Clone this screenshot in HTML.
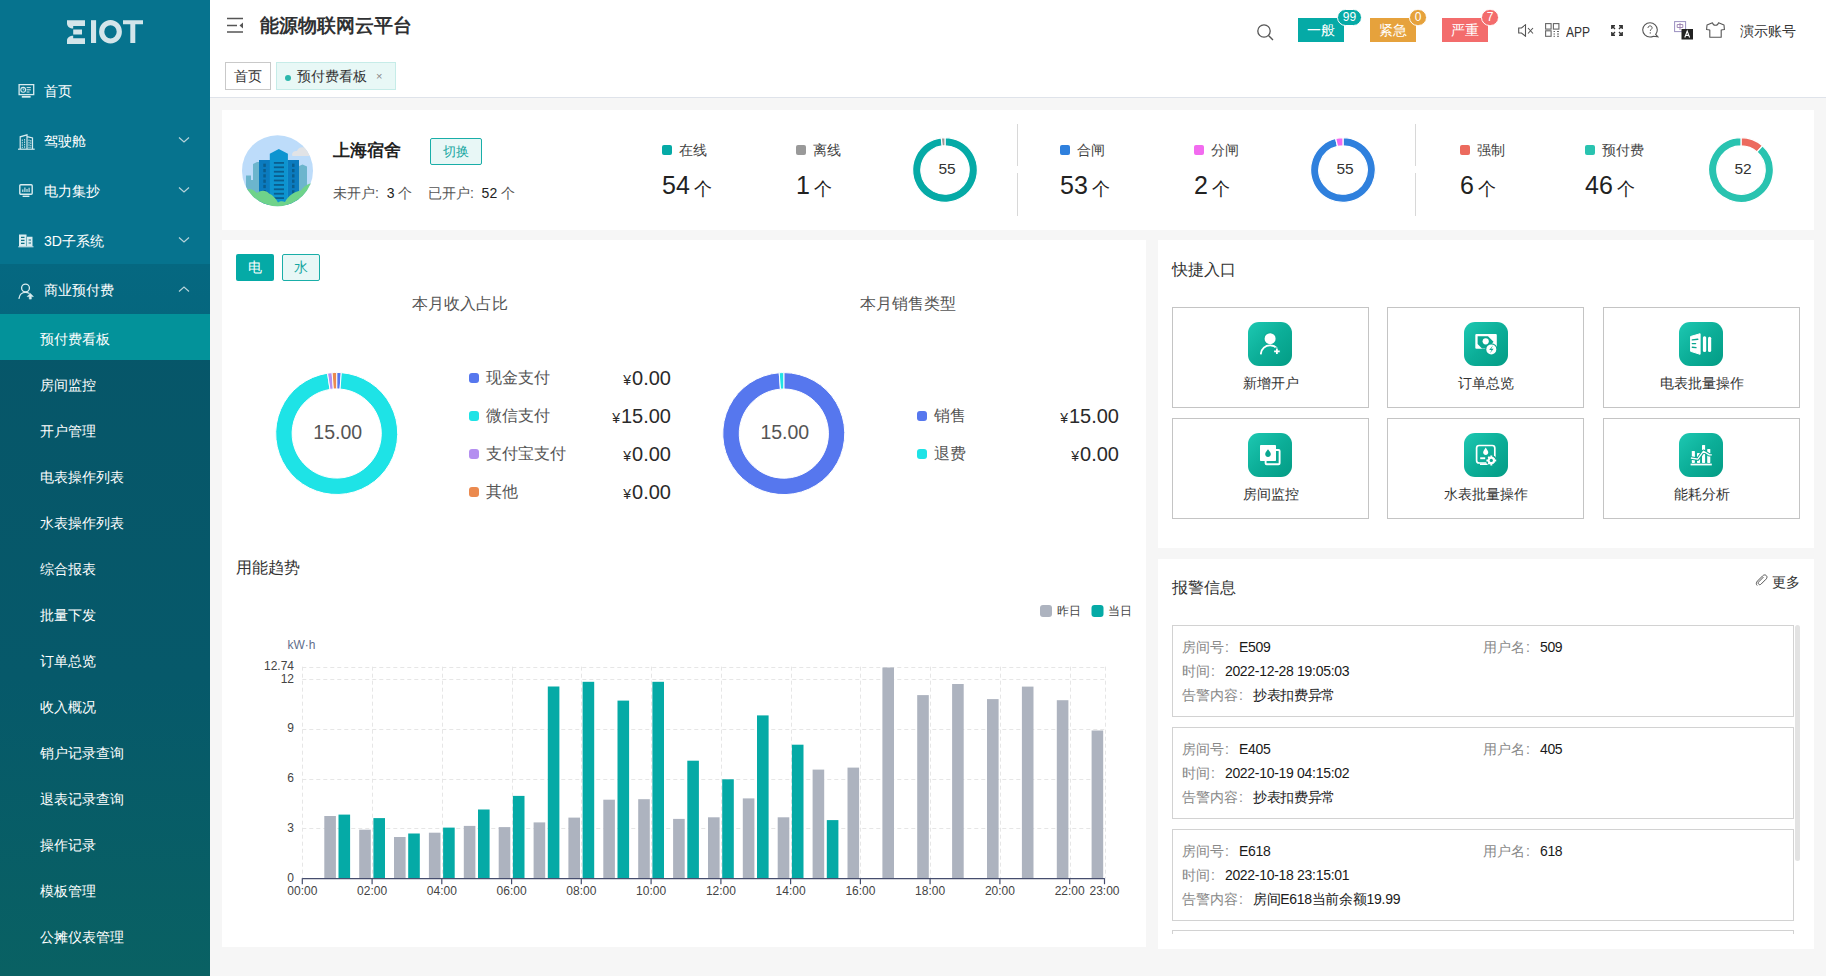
<!DOCTYPE html>
<html><head><meta charset="utf-8">
<style>
*{box-sizing:border-box;margin:0;padding:0}
html,body{width:1826px;height:976px;overflow:hidden}
body{position:relative;background:#f6f6f6;font-family:"Liberation Sans",sans-serif;color:#333}
.a{position:absolute;white-space:nowrap}
#sb{position:absolute;left:0;top:0;width:210px;height:976px;background:linear-gradient(180deg,#06738e 0%,#06738e 27%,#085f63 100%);overflow:hidden}
.mi{position:absolute;left:0;width:210px;height:50px;color:#fff;font-size:14px;line-height:50px}
.mi .t{position:absolute;left:44px;top:1px}
.mi svg.ic{position:absolute;left:18px;top:18px}
.mi .ar{position:absolute;left:178px;top:21px}
.sub{position:absolute;left:0;width:210px;height:46px;color:#fff;font-size:14px;line-height:46px;padding-left:40px;padding-top:2px}
#hd{position:absolute;left:210px;top:0;width:1616px;height:98px;background:#fff;border-bottom:1px solid #dfe3ea}
.card{position:absolute;background:#fff}
</style></head><body>
<div id="sb">
  <svg class="a" style="left:60px;top:14px" width="90" height="36" viewBox="60 14 90 36">
    <path fill="#d3e5ea" d="M67 20.2H85V26H73.2V28.5C70 28.5 67 26.5 67 23.5Z M73.2 29.5H82V34.5H73.2Z M67 43.9V40.5C67 37.5 70 35.8 73.2 35.8V38.2H85V43.9Z"/>
    <rect x="91" y="20.2" width="5.1" height="22.8" fill="#d3e5ea"/>
    <ellipse cx="110.5" cy="31.8" rx="8.8" ry="9.2" fill="none" stroke="#d3e5ea" stroke-width="5.2"/>
    <path fill="#d3e5ea" d="M123 20.2H143V24.2H135.3V43H130.3V24.2H123Z"/>
  </svg>
  <div class="mi" style="top:65px"><svg class="ic" width="17" height="15" viewBox="0 0 17 15" style="left:18px;top:19px"><rect x="1.1" y="0.6" width="14.6" height="10" fill="none" stroke="#d9ecef" stroke-width="1.3"/><circle cx="5.2" cy="5.8" r="2.4" fill="none" stroke="#d9ecef" stroke-width="1.1"/><path d="M5.2 4.3V5.9H6.3" fill="none" stroke="#d9ecef" stroke-width="0.8"/><path d="M8.6 3.6H12.8M8.6 5.8H12.8M8.6 8H11.5" stroke="#d9ecef" stroke-width="1"/><rect x="3.8" y="11.9" width="8.8" height="1.8" fill="#d9ecef"/></svg><span class="t">首页</span></div>
  <div class="mi" style="top:115px"><svg class="ic" width="17" height="16" viewBox="0 0 17 16" style="left:18px;top:19px"><path d="M0 15.2H16.7" stroke="#d9ecef" stroke-width="1.2"/><path d="M2.2 15V2.8L9 0.8V15M9 2.6L14.5 4V15" fill="none" stroke="#d9ecef" stroke-width="1.2"/><path d="M4.3 5.5v8.5M6.6 5v9M11 5.5v8.5M12.8 6v8" stroke="#d9ecef" stroke-width="0.9" stroke-dasharray="1.6 0.8"/></svg><span class="t">驾驶舱</span><svg class="ar" width="12" height="8" viewBox="0 0 12 8"><path d="M1 1.5L6 6L11 1.5" fill="none" stroke="#b7d3da" stroke-width="1.2"/></svg></div>
  <div class="mi" style="top:165px"><svg class="ic" width="16" height="15" viewBox="0 0 16 15" style="left:18px;top:19px"><rect x="1.8" y="0.8" width="12.4" height="9.4" rx="1" fill="none" stroke="#d9ecef" stroke-width="1.4"/><path d="M4.8 8V5.5M6.9 8V3.5M9 8V5M11.1 8V3.8" stroke="#d9ecef" stroke-width="1.1"/><rect x="4.6" y="11.6" width="6.8" height="1.4" fill="#d9ecef"/></svg><span class="t">电力集抄</span><svg class="ar" width="12" height="8" viewBox="0 0 12 8"><path d="M1 1.5L6 6L11 1.5" fill="none" stroke="#b7d3da" stroke-width="1.2"/></svg></div>
  <div class="mi" style="top:215px"><svg class="ic" width="17" height="14" viewBox="0 0 17 14" style="left:18px;top:19px"><path d="M1 12.6V0.4H8.5V12.6ZM9 12.6V2.8H14.5V12.6Z" fill="#d9ecef"/><path d="M3 3.4h3.5M3 6.4h3.5M3 9.4h3.5M10.6 6h2.4M10.6 9h2.4" stroke="#0b6f86" stroke-width="1.2"/><path d="M0.3 12.8H15.5" stroke="#d9ecef" stroke-width="1"/></svg><span class="t">3D子系统</span><svg class="ar" width="12" height="8" viewBox="0 0 12 8"><path d="M1 1.5L6 6L11 1.5" fill="none" stroke="#b7d3da" stroke-width="1.2"/></svg></div>
  <div class="mi" style="top:264px;background:rgba(0,0,0,0.09)"><svg class="ic" width="17" height="17" viewBox="0 0 17 17" style="left:18px;top:19px"><circle cx="7.5" cy="5" r="3.9" fill="none" stroke="#d9ecef" stroke-width="1.3"/><path d="M1 15.3C1.6 11.3 4.2 9.3 7.5 9.3C8.8 9.3 10 9.6 11 10.3" fill="none" stroke="#d9ecef" stroke-width="1.3" stroke-linecap="round"/><path d="M11.3 16.1V13.6H9.2L12.3 10.4L15.4 13.6H13.3V16.1Z" fill="#d9ecef" stroke="#d9ecef" stroke-width="0.6" stroke-linejoin="round"/></svg><span class="t">商业预付费</span><svg class="ar" width="12" height="8" viewBox="0 0 12 8"><path d="M1 6.5L6 2L11 6.5" fill="none" stroke="#b7d3da" stroke-width="1.2"/></svg></div>
  <div style="position:absolute;left:0;top:314px;width:210px;height:662px;background:linear-gradient(180deg,#065669 0%,#06596a 55%,#096163 100%)"></div>
  <div class="sub" style="top:314px;background:#03929a">预付费看板</div>
  <div class="sub" style="top:360px">房间监控</div>
  <div class="sub" style="top:406px">开户管理</div>
  <div class="sub" style="top:452px">电表操作列表</div>
  <div class="sub" style="top:498px">水表操作列表</div>
  <div class="sub" style="top:544px">综合报表</div>
  <div class="sub" style="top:590px">批量下发</div>
  <div class="sub" style="top:636px">订单总览</div>
  <div class="sub" style="top:682px">收入概况</div>
  <div class="sub" style="top:728px">销户记录查询</div>
  <div class="sub" style="top:774px">退表记录查询</div>
  <div class="sub" style="top:820px">操作记录</div>
  <div class="sub" style="top:866px">模板管理</div>
  <div class="sub" style="top:912px">公摊仪表管理</div>
</div>

<div id="hd">
  <svg class="a" style="left:17px;top:17px" width="17" height="16" viewBox="0 0 17 16"><path d="M0 1.5H16M0 8.5H10M0 15H16" stroke="#555" stroke-width="1.6"/><path d="M16 5.5L12.5 8.5L16 11.5Z" fill="#555"/></svg>
  <div class="a" style="left:50px;top:12px;font-size:19px;line-height:28px;font-weight:bold;color:#303133">能源物联网云平台</div>
  <div class="a" style="left:15px;top:62px;width:46px;height:28px;border:1px solid #c9c9c9;font-size:14px;line-height:26px;text-align:center;color:#333">首页</div>
  <div class="a" style="left:66px;top:62px;width:120px;height:28px;border:1px solid #c6ece8;background:#e8f8f6;font-size:14px;line-height:26px;color:#333">
    <span class="a" style="left:8px;top:12px;width:6px;height:6px;border-radius:50%;background:#2bb7ac"></span>
    <span class="a" style="left:20px;top:0">预付费看板</span>
    <span class="a" style="left:99px;top:0;font-size:11px;color:#888">×</span>
  </div>
  <svg class="a" style="left:1047px;top:24px" width="17" height="17" viewBox="0 0 17 17"><circle cx="7" cy="7" r="6.2" fill="none" stroke="#555" stroke-width="1.3"/><path d="M11.5 11.5L16 16" stroke="#555" stroke-width="1.3"/></svg>
  <div class="a" style="left:1088px;top:18px;width:46px;height:24px;background:#05aaa6;color:#fff;font-size:14px;line-height:24px;text-align:center">一般</div>
  <div class="a" style="left:1127px;top:9px;width:25px;height:17px;border-radius:9px;background:#05aaa6;border:1px solid #fff;color:#fff;font-size:12px;line-height:15px;text-align:center">99</div>
  <div class="a" style="left:1160px;top:18px;width:46px;height:24px;background:#e6a23c;color:#fff;font-size:14px;line-height:24px;text-align:center">紧急</div>
  <div class="a" style="left:1199px;top:9px;width:18px;height:17px;border-radius:9px;background:#e6a23c;border:1px solid #fff;color:#fff;font-size:12px;line-height:15px;text-align:center">0</div>
  <div class="a" style="left:1232px;top:18px;width:46px;height:24px;background:#f36c6c;color:#fff;font-size:14px;line-height:24px;text-align:center">严重</div>
  <div class="a" style="left:1271px;top:9px;width:18px;height:17px;border-radius:9px;background:#f36c6c;border:1px solid #fff;color:#fff;font-size:12px;line-height:15px;text-align:center">7</div>
  <svg class="a" style="left:1308px;top:24px" width="17" height="13" viewBox="0 0 17 13"><path d="M0.7 4H3.5L7.5 0.8V12.2L3.5 9H0.7Z" fill="none" stroke="#555" stroke-width="1.1"/><path d="M10 4L15 9.5M15 4L10 9.5" stroke="#555" stroke-width="1.1"/></svg>
  <svg class="a" style="left:1335px;top:23px" width="15" height="14" viewBox="0 0 15 14"><rect x="0.6" y="0.6" width="5.5" height="5.5" fill="none" stroke="#666" stroke-width="1.1"/><rect x="8.4" y="0.6" width="5.5" height="5.5" fill="none" stroke="#666" stroke-width="1.1"/><rect x="0.6" y="7.8" width="5.5" height="5.5" fill="none" stroke="#666" stroke-width="1.1"/><path d="M8.5 8.5h1.5M12 8.5h2M8.5 11h1.5M12 11h2M8.5 13.3h1.5M12 13.3h2" stroke="#666" stroke-width="1"/></svg>
  <div class="a" style="left:1356px;top:22px;font-size:14px;line-height:20px;color:#333;transform:scaleX(0.86);transform-origin:0 0">APP</div>
  <svg class="a" style="left:1401px;top:25px" width="12" height="11" viewBox="0 0 12 11"><path d="M0.8 4V0.8H4M0.8 0.8L4 4M11.2 4V0.8H8M11.2 0.8L8 4M0.8 7V10.2H4M0.8 10.2L4 7M11.2 7V10.2H8M11.2 10.2L8 7" fill="none" stroke="#333" stroke-width="1.4"/></svg>
  <svg class="a" style="left:1432px;top:22px" width="17" height="16" viewBox="0 0 17 16"><path d="M8 0.7C12 0.7 15.3 3.9 15.3 7.8C15.3 9.6 14.7 11.2 13.7 12.4L15.8 14.8L11.5 14.2C10.4 14.7 9.2 15 8 15C4 15 0.7 11.8 0.7 7.8C0.7 3.9 4 0.7 8 0.7Z" fill="none" stroke="#555" stroke-width="1.1"/><path d="M6 6C6 4.6 7 3.9 8.1 3.9C9.2 3.9 10.1 4.6 10.1 5.8C10.1 7.2 8.3 7.4 8.3 8.9" fill="none" stroke="#555" stroke-width="1"/><circle cx="8.3" cy="10.9" r="0.7" fill="#555"/></svg>
  <svg class="a" style="left:1464px;top:21px" width="20" height="19" viewBox="0 0 20 19"><rect x="0.6" y="0.6" width="11" height="10" fill="#fff" stroke="#9a8fc0" stroke-width="1"/><path d="M3.2 3.5h5.6v3H3.2zM6 2v7" fill="none" stroke="#9a7fb0" stroke-width="0.9"/><rect x="7.5" y="8" width="11.5" height="10.5" fill="#222"/><path d="M10.8 16.5L13.2 10L15.6 16.5M11.6 14.4H14.8" fill="none" stroke="#fff" stroke-width="1.1"/></svg>
  <svg class="a" style="left:1496px;top:22px" width="19" height="16" viewBox="0 0 19 16"><path d="M6.5 0.8L1 3L0.6 7.5L3.8 8V15.2H15.2V8L18.4 7.5L18 3L12.5 0.8C12 2.6 11 3.3 9.5 3.3C8 3.3 7 2.6 6.5 0.8Z" fill="none" stroke="#555" stroke-width="1.1" stroke-linejoin="round"/></svg>
  <div class="a" style="left:1530px;top:21px;font-size:14px;line-height:20px;color:#333">演示账号</div>
</div>

<div class="card" style="left:222px;top:110px;width:1592px;height:120px">
  <svg class="a" style="left:13px;top:18px" width="85" height="85" viewBox="0 0 85 85">
    <defs><clipPath id="cc"><circle cx="42.5" cy="42.7" r="35.5"/></clipPath></defs>
    <circle cx="42.5" cy="42.7" r="35.5" fill="#bddcfa"/>
    <g clip-path="url(#cc)">
      <path d="M57 27C57 24 59.5 22.5 62 23C63 20 66 18.5 69 19.5C71 18 75 18.5 76 21L76 28H59C57.5 28 57 27.5 57 27Z" fill="#e1e3e6"/>
      <path d="M11 75V47.5H16V52H18V36L22 34L24 34V75Z" fill="#6cb5cd"/>
      <path d="M63 75V38.5L67.5 36.5L72 38.5V75Z" fill="#6cb5cd"/>
      <rect x="24" y="32" width="11" height="45" fill="#0b7bbf"/>
      <rect x="52.5" y="32" width="11.5" height="45" fill="#0b7bbf"/>
      <path d="M34.8 25.7L43.8 21L52.9 25.7V77H34.8Z" fill="#0d94d0"/>
      <g fill="#0a5e8e"><rect x="38.9" y="34.0" width="10.1" height="1.8"/><rect x="38.9" y="38.4" width="10.1" height="1.8"/><rect x="38.9" y="42.8" width="10.1" height="1.8"/><rect x="38.9" y="47.2" width="10.1" height="1.8"/><rect x="38.9" y="51.6" width="10.1" height="1.8"/><rect x="38.9" y="56.0" width="10.1" height="1.8"/><rect x="38.9" y="60.4" width="10.1" height="1.8"/><rect x="38.9" y="64.8" width="10.1" height="1.8"/><rect x="38.9" y="69.2" width="10.1" height="1.8"/><rect x="28.3" y="35.7" width="2.5" height="3.2"/><rect x="57" y="35.7" width="2.5" height="3.2"/><rect x="28.3" y="41.0" width="2.5" height="3.2"/><rect x="57" y="41.0" width="2.5" height="3.2"/><rect x="28.3" y="46.3" width="2.5" height="3.2"/><rect x="57" y="46.3" width="2.5" height="3.2"/><rect x="28.3" y="51.6" width="2.5" height="3.2"/><rect x="57" y="51.6" width="2.5" height="3.2"/><rect x="28.3" y="56.9" width="2.5" height="3.2"/><rect x="57" y="56.9" width="2.5" height="3.2"/><rect x="28.3" y="62.2" width="2.5" height="3.2"/><rect x="57" y="62.2" width="2.5" height="3.2"/></g>
      <path d="M5 80V66C9 60 17 59 22 65C26 62 31 62 34 65.5C38 67 41 71 43 74.5C45 73 48 73 50 74C53 68 60 63 66 62.5C69 58 74 55 80 55V80Z" fill="#6fd38a"/>
    </g>
  </svg>
  <div class="a" style="left:111px;top:29px;font-size:17px;line-height:24px;font-weight:bold;color:#222">上海宿舍</div>
  <div class="a" style="left:208px;top:28px;width:52px;height:27px;border:1px solid #19aea8;background:#e8f7f6;color:#12a5a0;font-size:13px;line-height:25px;text-align:center;border-radius:2px">切换</div>
  <div class="a" style="left:111px;top:73px;font-size:14px;line-height:20px;color:#555">未开户:&nbsp; <span style="color:#222">3</span> 个 &nbsp; &nbsp;已开户:&nbsp; <span style="color:#222">52</span> 个</div>
<span class="a" style="left:440px;top:35px;width:10px;height:10px;border-radius:2px;background:#05aaa6"></span><div class="a" style="left:457px;top:30px;font-size:14px;line-height:20px;color:#444">在线</div><div class="a" style="left:440px;top:59px;font-size:25px;line-height:32px;color:#222">54<span style="font-size:18px;margin-left:4px;position:relative;top:1px">个</span></div><span class="a" style="left:574px;top:35px;width:10px;height:10px;border-radius:2px;background:#999"></span><div class="a" style="left:591px;top:30px;font-size:14px;line-height:20px;color:#444">离线</div><div class="a" style="left:574px;top:59px;font-size:25px;line-height:32px;color:#222">1<span style="font-size:18px;margin-left:4px;position:relative;top:1px">个</span></div><svg class="a" style="left:689px;top:26px" width="68" height="68" viewBox="689 26 68 68"><path d="M723.00 27.60A32.4 32.4 0 1 1 719.31 27.81L720.24 35.96A24.2 24.2 0 1 0 723.00 35.80Z" fill="#05aaa6" stroke="#fff" stroke-width="1.2"/><path d="M719.31 27.81A32.4 32.4 0 0 1 723.00 27.60L723.00 35.80A24.2 24.2 0 0 0 720.24 35.96Z" fill="#999" stroke="#fff" stroke-width="1.2"/><text x="725" y="64" text-anchor="middle" font-size="15.5" fill="#333" font-family="Liberation Sans">55</text></svg><span class="a" style="left:795px;top:14px;width:1px;height:42px;background:#d8d8d8"></span><span class="a" style="left:795px;top:63px;width:1px;height:43px;background:#d8d8d8"></span>
<span class="a" style="left:838px;top:35px;width:10px;height:10px;border-radius:2px;background:#2f80dd"></span><div class="a" style="left:855px;top:30px;font-size:14px;line-height:20px;color:#444">合闸</div><div class="a" style="left:838px;top:59px;font-size:25px;line-height:32px;color:#222">53<span style="font-size:18px;margin-left:4px;position:relative;top:1px">个</span></div><span class="a" style="left:972px;top:35px;width:10px;height:10px;border-radius:2px;background:#f26bef"></span><div class="a" style="left:989px;top:30px;font-size:14px;line-height:20px;color:#444">分闸</div><div class="a" style="left:972px;top:59px;font-size:25px;line-height:32px;color:#222">2<span style="font-size:18px;margin-left:4px;position:relative;top:1px">个</span></div><svg class="a" style="left:1087px;top:26px" width="68" height="68" viewBox="1087 26 68 68"><path d="M1121.00 27.60A32.4 32.4 0 1 1 1113.66 28.44L1115.52 36.43A24.2 24.2 0 1 0 1121.00 35.80Z" fill="#2f80dd" stroke="#fff" stroke-width="1.2"/><path d="M1113.66 28.44A32.4 32.4 0 0 1 1121.00 27.60L1121.00 35.80A24.2 24.2 0 0 0 1115.52 36.43Z" fill="#f26bef" stroke="#fff" stroke-width="1.2"/><text x="1123" y="64" text-anchor="middle" font-size="15.5" fill="#333" font-family="Liberation Sans">55</text></svg><span class="a" style="left:1193px;top:14px;width:1px;height:42px;background:#d8d8d8"></span><span class="a" style="left:1193px;top:63px;width:1px;height:43px;background:#d8d8d8"></span>
<span class="a" style="left:1238px;top:35px;width:10px;height:10px;border-radius:2px;background:#ec6a5e"></span><div class="a" style="left:1255px;top:30px;font-size:14px;line-height:20px;color:#444">强制</div><div class="a" style="left:1238px;top:59px;font-size:25px;line-height:32px;color:#222">6<span style="font-size:18px;margin-left:4px;position:relative;top:1px">个</span></div><span class="a" style="left:1363px;top:35px;width:10px;height:10px;border-radius:2px;background:#29c3b0"></span><div class="a" style="left:1380px;top:30px;font-size:14px;line-height:20px;color:#444">预付费</div><div class="a" style="left:1363px;top:59px;font-size:25px;line-height:32px;color:#222">46<span style="font-size:18px;margin-left:4px;position:relative;top:1px">个</span></div><svg class="a" style="left:1485px;top:26px" width="68" height="68" viewBox="1485 26 68 68"><path d="M1519.00 27.60A32.4 32.4 0 0 1 1540.49 35.75L1535.05 41.89A24.2 24.2 0 0 0 1519.00 35.80Z" fill="#ec6a5e" stroke="#fff" stroke-width="1.2"/><path d="M1540.49 35.75A32.4 32.4 0 1 1 1519.00 27.60L1519.00 35.80A24.2 24.2 0 1 0 1535.05 41.89Z" fill="#29c3b0" stroke="#fff" stroke-width="1.2"/><text x="1521" y="64" text-anchor="middle" font-size="15.5" fill="#333" font-family="Liberation Sans">52</text></svg>
</div>
<div class="card" style="left:222px;top:240px;width:924px;height:707px">
<div class="a" style="left:14px;top:14px;width:38px;height:27px;background:#05aaa6;border-radius:2px;color:#fff;font-size:14px;line-height:27px;text-align:center">电</div><div class="a" style="left:60px;top:14px;width:38px;height:27px;background:#e8f7f6;border:1px solid #19aea8;border-radius:2px;color:#12a5a0;font-size:14px;line-height:25px;text-align:center">水</div>
<div class="a" style="left:190px;top:53px;font-size:16px;line-height:22px;color:#555">本月收入占比</div><div class="a" style="left:638px;top:53px;font-size:16px;line-height:22px;color:#555">本月销售类型</div>
<svg class="a" style="left:0;top:0" width="924" height="520" viewBox="0 0 924 520"><path d="M114.70 132.50A61 61 0 0 1 119.29 132.67L118.06 149.03A44.6 44.6 0 0 0 114.70 148.90Z" fill="#5677ee" stroke="#fff" stroke-width="1"/><path d="M119.29 132.67A61 61 0 1 1 105.54 133.19L108.00 149.41A44.6 44.6 0 1 0 118.06 149.03Z" fill="#1ee3e6" stroke="#fff" stroke-width="1"/><path d="M105.54 133.19A61 61 0 0 1 110.11 132.67L111.34 149.03A44.6 44.6 0 0 0 108.00 149.41Z" fill="#b48ff0" stroke="#fff" stroke-width="1"/><path d="M110.11 132.67A61 61 0 0 1 114.70 132.50L114.70 148.90A44.6 44.6 0 0 0 111.34 149.03Z" fill="#eb8a4f" stroke="#fff" stroke-width="1"/><path d="M561.80 132.60A61 61 0 1 1 557.21 132.77L558.44 149.13A44.6 44.6 0 1 0 561.80 149.00Z" fill="#5677ee" stroke="#fff" stroke-width="1"/><path d="M557.21 132.77A61 61 0 0 1 561.80 132.60L561.80 149.00A44.6 44.6 0 0 0 558.44 149.13Z" fill="#1ee3e6" stroke="#fff" stroke-width="1"/><text x="115.69999999999999" y="199.0" text-anchor="middle" font-size="19.5" fill="#555" font-family="Liberation Sans">15.00</text><text x="562.8" y="199.10000000000002" text-anchor="middle" font-size="19.5" fill="#555" font-family="Liberation Sans">15.00</text></svg>
<span class="a" style="left:247px;top:132.8px;width:10px;height:10px;border-radius:3px;background:#5677ee"></span><div class="a" style="left:264px;top:126.8px;font-size:16px;line-height:22px;color:#555">现金支付</div><div class="a" style="right:475px;top:125.8px;font-size:20px;line-height:25px;color:#2a2a2a"><span style="font-size:14px;margin-right:1px">¥</span>0.00</div>
<span class="a" style="left:247px;top:170.7px;width:10px;height:10px;border-radius:3px;background:#1ee3e6"></span><div class="a" style="left:264px;top:164.7px;font-size:16px;line-height:22px;color:#555">微信支付</div><div class="a" style="right:475px;top:163.7px;font-size:20px;line-height:25px;color:#2a2a2a"><span style="font-size:14px;margin-right:1px">¥</span>15.00</div>
<span class="a" style="left:247px;top:208.6px;width:10px;height:10px;border-radius:3px;background:#b48ff0"></span><div class="a" style="left:264px;top:202.6px;font-size:16px;line-height:22px;color:#555">支付宝支付</div><div class="a" style="right:475px;top:201.6px;font-size:20px;line-height:25px;color:#2a2a2a"><span style="font-size:14px;margin-right:1px">¥</span>0.00</div>
<span class="a" style="left:247px;top:246.5px;width:10px;height:10px;border-radius:3px;background:#eb8a4f"></span><div class="a" style="left:264px;top:240.5px;font-size:16px;line-height:22px;color:#555">其他</div><div class="a" style="right:475px;top:239.5px;font-size:20px;line-height:25px;color:#2a2a2a"><span style="font-size:14px;margin-right:1px">¥</span>0.00</div>
<span class="a" style="left:695px;top:170.8px;width:10px;height:10px;border-radius:3px;background:#5677ee"></span><div class="a" style="left:712px;top:164.8px;font-size:16px;line-height:22px;color:#555">销售</div><div class="a" style="right:27px;top:163.8px;font-size:20px;line-height:25px;color:#2a2a2a"><span style="font-size:14px;margin-right:1px">¥</span>15.00</div>
<span class="a" style="left:695px;top:208.7px;width:10px;height:10px;border-radius:3px;background:#1ee3e6"></span><div class="a" style="left:712px;top:202.7px;font-size:16px;line-height:22px;color:#555">退费</div><div class="a" style="right:27px;top:201.7px;font-size:20px;line-height:25px;color:#2a2a2a"><span style="font-size:14px;margin-right:1px">¥</span>0.00</div>
<div class="a" style="left:14px;top:317px;font-size:16px;line-height:22px;color:#333">用能趋势</div>
<svg class="a" style="left:0;top:0" width="924" height="707" viewBox="222 240 924 707" font-family="Liberation Sans"><g stroke="#e6e6e6" stroke-width="1" stroke-dasharray="4 3" fill="none"><path d="M302.3 828.5H1104.5"/><path d="M302.3 779.5H1104.5"/><path d="M302.3 729.5H1104.5"/><path d="M302.3 679.5H1104.5"/><path d="M302.3 667.5H1104.5"/><path d="M302.5 666.7V878.2"/><path d="M372.5 666.7V878.2"/><path d="M442.5 666.7V878.2"/><path d="M512.5 666.7V878.2"/><path d="M581.5 666.7V878.2"/><path d="M651.5 666.7V878.2"/><path d="M721.5 666.7V878.2"/><path d="M791.5 666.7V878.2"/><path d="M860.5 666.7V878.2"/><path d="M930.5 666.7V878.2"/><path d="M1000.5 666.7V878.2"/><path d="M1070.5 666.7V878.2"/><path d="M1105.5 666.7V878.2"/></g><rect x="324.3" y="816.0" width="11.6" height="62.3" fill="#adb3bf"/><rect x="359.2" y="829.7" width="11.6" height="48.5" fill="#adb3bf"/><rect x="394.0" y="837.0" width="11.6" height="41.2" fill="#adb3bf"/><rect x="428.9" y="832.7" width="11.6" height="45.5" fill="#adb3bf"/><rect x="463.8" y="825.9" width="11.6" height="52.3" fill="#adb3bf"/><rect x="498.7" y="827.1" width="11.6" height="51.1" fill="#adb3bf"/><rect x="533.6" y="822.4" width="11.6" height="55.8" fill="#adb3bf"/><rect x="568.4" y="817.6" width="11.6" height="60.6" fill="#adb3bf"/><rect x="603.3" y="799.7" width="11.6" height="78.5" fill="#adb3bf"/><rect x="638.2" y="799.2" width="11.6" height="79.0" fill="#adb3bf"/><rect x="673.1" y="818.9" width="11.6" height="59.3" fill="#adb3bf"/><rect x="708.0" y="817.3" width="11.6" height="60.9" fill="#adb3bf"/><rect x="742.8" y="798.4" width="11.6" height="79.8" fill="#adb3bf"/><rect x="777.7" y="817.3" width="11.6" height="60.9" fill="#adb3bf"/><rect x="812.6" y="769.6" width="11.6" height="108.6" fill="#adb3bf"/><rect x="847.5" y="767.6" width="11.6" height="110.6" fill="#adb3bf"/><rect x="882.4" y="667.5" width="11.6" height="210.7" fill="#adb3bf"/><rect x="917.2" y="695.1" width="11.6" height="183.1" fill="#adb3bf"/><rect x="952.1" y="684.0" width="11.6" height="194.2" fill="#adb3bf"/><rect x="987.0" y="699.1" width="11.6" height="179.1" fill="#adb3bf"/><rect x="1021.9" y="686.6" width="11.6" height="191.6" fill="#adb3bf"/><rect x="1056.8" y="700.2" width="11.6" height="178.0" fill="#adb3bf"/><rect x="1091.6" y="730.5" width="11.6" height="147.7" fill="#adb3bf"/><rect x="338.5" y="814.6" width="11.6" height="63.6" fill="#05aaa6"/><rect x="373.4" y="818.1" width="11.6" height="60.1" fill="#05aaa6"/><rect x="408.2" y="833.5" width="11.6" height="44.7" fill="#05aaa6"/><rect x="443.1" y="827.6" width="11.6" height="50.6" fill="#05aaa6"/><rect x="478.0" y="809.5" width="11.6" height="68.7" fill="#05aaa6"/><rect x="512.9" y="795.9" width="11.6" height="82.3" fill="#05aaa6"/><rect x="547.8" y="686.5" width="11.6" height="191.7" fill="#05aaa6"/><rect x="582.6" y="681.8" width="11.6" height="196.4" fill="#05aaa6"/><rect x="617.5" y="700.6" width="11.6" height="177.6" fill="#05aaa6"/><rect x="652.4" y="681.8" width="11.6" height="196.4" fill="#05aaa6"/><rect x="687.3" y="760.7" width="11.6" height="117.5" fill="#05aaa6"/><rect x="722.2" y="779.3" width="11.6" height="98.9" fill="#05aaa6"/><rect x="757.0" y="715.4" width="11.6" height="162.8" fill="#05aaa6"/><rect x="791.9" y="744.7" width="11.6" height="133.5" fill="#05aaa6"/><rect x="826.8" y="820.1" width="11.6" height="58.1" fill="#05aaa6"/><g stroke="#464e6e" stroke-width="1.2" fill="none"><path d="M302.3 878.7H1104.5"/><path d="M302.3 878.2V884.2"/><path d="M372.1 878.2V884.2"/><path d="M441.8 878.2V884.2"/><path d="M511.6 878.2V884.2"/><path d="M581.3 878.2V884.2"/><path d="M651.1 878.2V884.2"/><path d="M720.9 878.2V884.2"/><path d="M790.6 878.2V884.2"/><path d="M860.4 878.2V884.2"/><path d="M930.1 878.2V884.2"/><path d="M999.9 878.2V884.2"/><path d="M1069.7 878.2V884.2"/><path d="M1104.5 878.2V884.2"/></g><g font-size="12" fill="#444"><text x="294" y="881.7" text-anchor="end">0</text><text x="294" y="831.9" text-anchor="end">3</text><text x="294" y="782.1" text-anchor="end">6</text><text x="294" y="732.3" text-anchor="end">9</text><text x="294" y="682.5" text-anchor="end">12</text><text x="294" y="670.2" text-anchor="end">12.74</text></g><g font-size="12" fill="#444"><text x="302.3" y="895.0" text-anchor="middle">00:00</text><text x="372.1" y="895.0" text-anchor="middle">02:00</text><text x="441.8" y="895.0" text-anchor="middle">04:00</text><text x="511.6" y="895.0" text-anchor="middle">06:00</text><text x="581.3" y="895.0" text-anchor="middle">08:00</text><text x="651.1" y="895.0" text-anchor="middle">10:00</text><text x="720.9" y="895.0" text-anchor="middle">12:00</text><text x="790.6" y="895.0" text-anchor="middle">14:00</text><text x="860.4" y="895.0" text-anchor="middle">16:00</text><text x="930.1" y="895.0" text-anchor="middle">18:00</text><text x="999.9" y="895.0" text-anchor="middle">20:00</text><text x="1069.7" y="895.0" text-anchor="middle">22:00</text><text x="1104.5" y="895.0" text-anchor="middle">23:00</text></g><text x="301.5" y="648.5" text-anchor="middle" font-size="12" fill="#5f6e8c">kW·h</text><rect x="1040" y="605" width="12" height="12" rx="3" fill="#adb3bf"/><text x="1057" y="614.5" font-size="12" fill="#444">昨日</text><rect x="1091.5" y="605" width="12" height="12" rx="3" fill="#05aaa6"/><text x="1108" y="614.5" font-size="12" fill="#444">当日</text></svg>
</div>
<div class="card" style="left:1158px;top:240px;width:656px;height:308px">
<div class="a" style="left:14px;top:19px;font-size:16px;line-height:22px;color:#333">快捷入口</div>
<div class="a" style="left:14px;top:67px;width:197px;height:101px;border:1px solid #c4c4c4"><svg class="a" style="left:75px;top:14px" width="44" height="44" viewBox="0 0 44 44"><defs><linearGradient id="gq0" x1="0" y1="0" x2="1" y2="1"><stop offset="0" stop-color="#1dc8b2"/><stop offset="0.5" stop-color="#0cae98"/><stop offset="1" stop-color="#039c85"/></linearGradient></defs><rect width="44" height="44" rx="11" fill="url(#gq0)"/><g transform="translate(1 0)"><circle cx="21.1" cy="16.7" r="6.8" fill="#0fae98"/><path d="M11.9 31.6C12.5 26.6 16.3 23.4 21 23.4C24.3 23.4 26.6 24.7 28 26.4" fill="none" stroke="#fff" stroke-width="1.9" stroke-linecap="round"/><circle cx="21.1" cy="16.7" r="5.5" fill="#fff"/><path d="M27.9 25.6V33M24.2 29.3H31.6" stroke="#0cab95" stroke-width="3.6"/><path d="M27.9 26.5V32.1M25.1 29.3H30.7" stroke="#fff" stroke-width="1.8"/></g></svg><div class="a" style="left:0;top:65px;width:195px;text-align:center;font-size:14px;line-height:20px;color:#333">新增开户</div></div>
<div class="a" style="left:229px;top:67px;width:197px;height:101px;border:1px solid #c4c4c4"><svg class="a" style="left:76px;top:14px" width="44" height="44" viewBox="0 0 44 44"><defs><linearGradient id="gq1" x1="0" y1="0" x2="1" y2="1"><stop offset="0" stop-color="#1dc8b2"/><stop offset="0.5" stop-color="#0cae98"/><stop offset="1" stop-color="#039c85"/></linearGradient></defs><rect width="44" height="44" rx="11" fill="url(#gq1)"/><rect x="11.3" y="12" width="21.5" height="14.8" rx="1" fill="#fff"/><path d="M13.6 14.2H24L29.5 19.8L24 26.5H18L13.6 22Z" fill="#0aa690"/><circle cx="21.7" cy="19.3" r="3.1" fill="#fff"/><circle cx="27.3" cy="27.4" r="6.2" fill="#0aa690"/><circle cx="27.3" cy="27.4" r="5" fill="#fff"/><path d="M29 23.3L25.2 28H27.6L25.8 31.6L29.6 26.8H27.2Z" fill="#0aa690"/></svg><div class="a" style="left:0;top:65px;width:195px;text-align:center;font-size:14px;line-height:20px;color:#333">订单总览</div></div>
<div class="a" style="left:445px;top:67px;width:197px;height:101px;border:1px solid #c4c4c4"><svg class="a" style="left:75px;top:14px" width="44" height="44" viewBox="0 0 44 44"><defs><linearGradient id="gq2" x1="0" y1="0" x2="1" y2="1"><stop offset="0" stop-color="#1dc8b2"/><stop offset="0.5" stop-color="#0cae98"/><stop offset="1" stop-color="#039c85"/></linearGradient></defs><rect width="44" height="44" rx="11" fill="url(#gq2)"/><path d="M11.6 14.5L21.1 11.7V32.3L11.6 29.3Z" fill="#fff" stroke="#fff" stroke-width="1" stroke-linejoin="round"/><path d="M13.3 17.9L18.8 17.3M13.3 21.6L16.6 21.6M13.3 25.2L17 25.6" stroke="#0aa690" stroke-width="1.4" stroke-linecap="round"/><rect x="23.9" y="14.3" width="3.3" height="15.8" rx="1.5" fill="#fff"/><rect x="29" y="14.8" width="3.2" height="15.3" rx="1.5" fill="#fff"/></svg><div class="a" style="left:0;top:65px;width:195px;text-align:center;font-size:14px;line-height:20px;color:#333">电表批量操作</div></div>
<div class="a" style="left:14px;top:178px;width:197px;height:101px;border:1px solid #c4c4c4"><svg class="a" style="left:75px;top:14px" width="44" height="44" viewBox="0 0 44 44"><defs><linearGradient id="gq3" x1="0" y1="0" x2="1" y2="1"><stop offset="0" stop-color="#1dc8b2"/><stop offset="0.5" stop-color="#0cae98"/><stop offset="1" stop-color="#039c85"/></linearGradient></defs><rect width="44" height="44" rx="11" fill="url(#gq3)"/><g transform="translate(1 0)"><rect x="16.6" y="17" width="14" height="14.2" rx="1" fill="none" stroke="#fff" stroke-width="1.9"/><rect x="11" y="12" width="16" height="16" rx="0.8" fill="#fff"/><path d="M19 16.3C17.3 18.5 16.2 19.8 16.2 21.2C16.2 22.8 17.5 24 19 24C20.5 24 21.8 22.8 21.8 21.2C21.8 19.8 20.7 18.5 19 16.3Z" fill="#0aa690"/></g></svg><div class="a" style="left:0;top:65px;width:195px;text-align:center;font-size:14px;line-height:20px;color:#333">房间监控</div></div>
<div class="a" style="left:229px;top:178px;width:197px;height:101px;border:1px solid #c4c4c4"><svg class="a" style="left:76px;top:14px" width="44" height="44" viewBox="0 0 44 44"><defs><linearGradient id="gq4" x1="0" y1="0" x2="1" y2="1"><stop offset="0" stop-color="#1dc8b2"/><stop offset="0.5" stop-color="#0cae98"/><stop offset="1" stop-color="#039c85"/></linearGradient></defs><rect width="44" height="44" rx="11" fill="url(#gq4)"/><path d="M16 32H25.5L24 30.5H16Z" fill="#fff"/><rect x="12.6" y="12.5" width="18.2" height="17.5" rx="2.5" fill="none" stroke="#fff" stroke-width="1.7"/><path d="M21.7 14.5C20 17 19.2 18.3 19.2 19.6C19.2 21 20.3 22 21.7 22C23.1 22 24.2 21 24.2 19.6C24.2 18.3 23.4 17 21.7 14.5Z" fill="#fff"/><rect x="16.2" y="24.3" width="5" height="1.9" fill="#fff"/><circle cx="27.3" cy="27.4" r="5.4" fill="#0aa690"/><g fill="#fff"><circle cx="27.3" cy="27.4" r="3.6"/><path d="M26.3 22.5h2v2.2h-2zM26.3 30.1h2v2.3h-2zM22.4 26.4h2.2v2h-2.2zM30 26.4h2.2v2H30z"/><path d="M23.6 24.5l1.4-1.4 1.6 1.6-1.4 1.4zM28 28.9l1.4-1.4 1.6 1.6-1.4 1.4zM23.6 30.3l1.6-1.6 1.4 1.4-1.6 1.6zM28 25.9l1.6-1.6 1.4 1.4-1.6 1.6z"/></g><circle cx="27.3" cy="27.4" r="1.6" fill="#0aa690"/></svg><div class="a" style="left:0;top:65px;width:195px;text-align:center;font-size:14px;line-height:20px;color:#333">水表批量操作</div></div>
<div class="a" style="left:445px;top:178px;width:197px;height:101px;border:1px solid #c4c4c4"><svg class="a" style="left:75px;top:14px" width="44" height="44" viewBox="0 0 44 44"><defs><linearGradient id="gq5" x1="0" y1="0" x2="1" y2="1"><stop offset="0" stop-color="#1dc8b2"/><stop offset="0.5" stop-color="#0cae98"/><stop offset="1" stop-color="#039c85"/></linearGradient></defs><rect width="44" height="44" rx="11" fill="url(#gq5)"/><g fill="#fff"><rect x="12.8" y="17.9" width="3.1" height="12" rx="0.6"/><rect x="18" y="20" width="3.1" height="9.9" rx="0.6"/><rect x="23" y="12" width="3.1" height="17.9" rx="0.6"/><rect x="28.2" y="16" width="3.1" height="13.9" rx="0.6"/><rect x="11.6" y="30.6" width="21.2" height="1.8"/></g><path d="M11.9 25L18.7 26.2L24.5 18.2L30.3 21.9H32.8" fill="none" stroke="#0aa690" stroke-width="3.4" stroke-linejoin="round"/><path d="M11.9 25L18.7 26.2L24.5 18.2L30.3 21.9H32.8" fill="none" stroke="#fff" stroke-width="1.3" stroke-linejoin="round"/></svg><div class="a" style="left:0;top:65px;width:195px;text-align:center;font-size:14px;line-height:20px;color:#333">能耗分析</div></div>
</div>
<div class="card" style="left:1158px;top:559px;width:656px;height:390px;overflow:hidden">
<div class="a" style="left:14px;top:18px;font-size:16px;line-height:22px;color:#333">报警信息</div><svg class="a" style="left:597px;top:15px" width="13" height="13" viewBox="0 0 13 13"><path d="M8.5 3L3.8 7.8C3 8.6 3 9.6 3.7 10.2C4.4 10.9 5.4 10.8 6.1 10.1L11 5.2C12.2 4 12.3 2.5 11.3 1.6C10.3 0.6 8.8 0.7 7.6 1.9L2.5 7C1 8.5 1 10.5 2.2 11.5" fill="none" stroke="#555" stroke-width="1"/></svg><div class="a" style="left:614px;top:13px;font-size:14px;line-height:20px;color:#333">更多</div>
<div class="a" style="left:14px;top:66px;width:628px;height:309px;overflow:hidden">
<div class="a" style="left:0;top:0px;width:622px;height:92px;border:1px solid #d2d2d2;font-size:14px;line-height:24px"><div class="a" style="left:9px;top:9px;color:#888">房间号<span style="margin-left:1px">:</span><span style="color:#1a1a1a;margin-left:10px;letter-spacing:-0.3px">E509</span></div><div class="a" style="left:310px;top:9px;color:#888">用户名<span style="margin-left:1px">:</span><span style="color:#1a1a1a;margin-left:10px;letter-spacing:-0.3px">509</span></div><div class="a" style="left:9px;top:33px;color:#888">时间<span style="margin-left:1px">:</span><span style="color:#1a1a1a;margin-left:10px;letter-spacing:-0.3px">2022-12-28 19:05:03</span></div><div class="a" style="left:9px;top:57px;color:#888">告警内容<span style="margin-left:1px">:</span><span style="color:#1a1a1a;margin-left:10px;letter-spacing:-0.3px">抄表扣费异常</span></div></div>
<div class="a" style="left:0;top:102px;width:622px;height:92px;border:1px solid #d2d2d2;font-size:14px;line-height:24px"><div class="a" style="left:9px;top:9px;color:#888">房间号<span style="margin-left:1px">:</span><span style="color:#1a1a1a;margin-left:10px;letter-spacing:-0.3px">E405</span></div><div class="a" style="left:310px;top:9px;color:#888">用户名<span style="margin-left:1px">:</span><span style="color:#1a1a1a;margin-left:10px;letter-spacing:-0.3px">405</span></div><div class="a" style="left:9px;top:33px;color:#888">时间<span style="margin-left:1px">:</span><span style="color:#1a1a1a;margin-left:10px;letter-spacing:-0.3px">2022-10-19 04:15:02</span></div><div class="a" style="left:9px;top:57px;color:#888">告警内容<span style="margin-left:1px">:</span><span style="color:#1a1a1a;margin-left:10px;letter-spacing:-0.3px">抄表扣费异常</span></div></div>
<div class="a" style="left:0;top:204px;width:622px;height:92px;border:1px solid #d2d2d2;font-size:14px;line-height:24px"><div class="a" style="left:9px;top:9px;color:#888">房间号<span style="margin-left:1px">:</span><span style="color:#1a1a1a;margin-left:10px;letter-spacing:-0.3px">E618</span></div><div class="a" style="left:310px;top:9px;color:#888">用户名<span style="margin-left:1px">:</span><span style="color:#1a1a1a;margin-left:10px;letter-spacing:-0.3px">618</span></div><div class="a" style="left:9px;top:33px;color:#888">时间<span style="margin-left:1px">:</span><span style="color:#1a1a1a;margin-left:10px;letter-spacing:-0.3px">2022-10-18 23:15:01</span></div><div class="a" style="left:9px;top:57px;color:#888">告警内容<span style="margin-left:1px">:</span><span style="color:#1a1a1a;margin-left:10px;letter-spacing:-0.3px">房间E618当前余额19.99</span></div></div>
<div class="a" style="left:0;top:305px;width:622px;height:92px;border:1px solid #d2d2d2;font-size:14px;line-height:24px"><div class="a" style="left:9px;top:9px;color:#888">房间号<span style="margin-left:1px">:</span><span style="color:#1a1a1a;margin-left:10px;letter-spacing:-0.3px">E601</span></div><div class="a" style="left:310px;top:9px;color:#888">用户名<span style="margin-left:1px">:</span><span style="color:#1a1a1a;margin-left:10px;letter-spacing:-0.3px">601</span></div><div class="a" style="left:9px;top:33px;color:#888">时间<span style="margin-left:1px">:</span><span style="color:#1a1a1a;margin-left:10px;letter-spacing:-0.3px">2022-10-18 23:15:01</span></div><div class="a" style="left:9px;top:57px;color:#888">告警内容<span style="margin-left:1px">:</span><span style="color:#1a1a1a;margin-left:10px;letter-spacing:-0.3px">房间E601当前余额19.99</span></div></div>
<div class="a" style="left:623px;top:0;width:5px;height:236px;border-radius:3px;background:#e3e3e3"></div></div></div>
</body></html>
